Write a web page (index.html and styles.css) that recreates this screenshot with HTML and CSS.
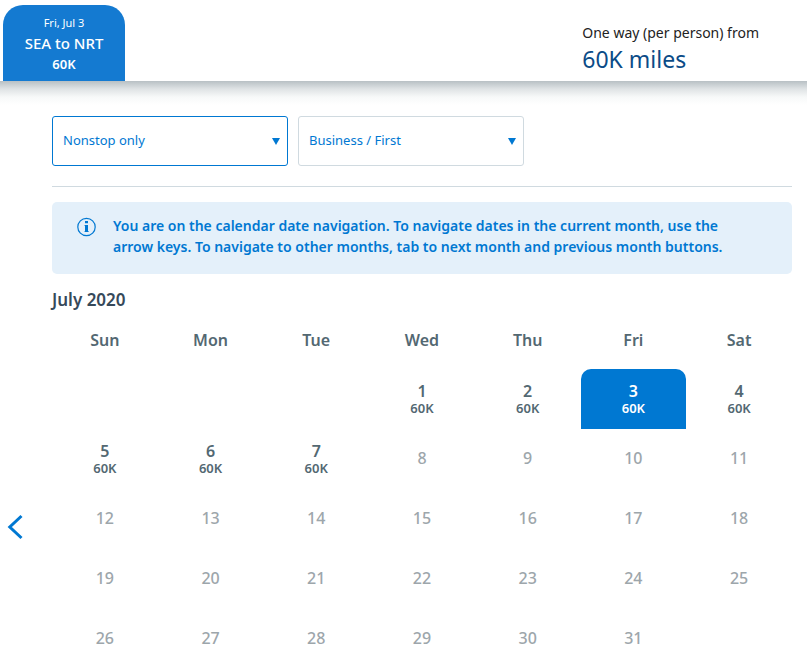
FILE: index.html
```html
<!DOCTYPE html>
<html lang="en">
<head>
<meta charset="utf-8">
<meta name="viewport" content="width=device-width, initial-scale=1">
<title>Award calendar</title>
<link rel="stylesheet" href="styles.css">
</head>
<body>
<header class="summary">
  <a class="slice" href="#calendar">
    <span class="slice-date">Fri, Jul 3</span>
    <span class="slice-route">SEA to NRT</span>
    <span class="slice-price">60K</span>
  </a>
  <div class="fare">
    <span class="fare-label">One way (per person) from</span>
    <span class="fare-price">60K miles</span>
  </div>
</header>
<main class="content">
  <form class="filters">
    <div class="field field-active">
      <select class="select" aria-label="Stops"><option>Nonstop only</option></select>
      <svg class="caret" viewBox="0 0 8 7" aria-hidden="true"><path d="M0 0H8L4 7Z"/></svg>
    </div>
    <div class="field">
      <select class="select" aria-label="Cabin"><option>Business / First</option></select>
      <svg class="caret" viewBox="0 0 8 7" aria-hidden="true"><path d="M0 0H8L4 7Z"/></svg>
    </div>
  </form>
  <div class="notice">
    <svg class="notice-icon" viewBox="0 0 20 20" aria-hidden="true">
      <circle cx="9.5" cy="10" r="8.7" fill="none" stroke="currentColor" stroke-width="1.2"/>
      <path fill="currentColor" d="M8 4H11V6.2H8ZM7.6 8H11V14H11.6V15H7.6V14H8V9H7.6Z"/>
    </svg>
    <p class="notice-text">You are on the calendar date navigation. To navigate dates in the current month, use the arrow keys. To navigate to other months, tab to next month and previous month buttons.</p>
  </div>
  <section class="calendar" id="calendar">
    <button class="previous" type="button" aria-label="Previous month">
      <svg class="chevron" viewBox="0 0 16 26" aria-hidden="true"><path d="M14.5 2L2.8 13L14.5 24"/></svg>
    </button>
    <div class="month">
      <h2 class="month-title">July 2020</h2>
      <table class="days">
        <thead>
          <tr><th>Sun</th><th>Mon</th><th>Tue</th><th>Wed</th><th>Thu</th><th>Fri</th><th>Sat</th></tr>
        </thead>
        <tbody>
          <tr>
            <td></td><td></td><td></td>
            <td><button class="day" type="button">1<span class="miles">60K</span></button></td>
            <td><button class="day" type="button">2<span class="miles">60K</span></button></td>
            <td><button class="day day-selected" type="button" aria-pressed="true">3<span class="miles">60K</span></button></td>
            <td><button class="day" type="button">4<span class="miles">60K</span></button></td>
          </tr>
          <tr>
            <td><button class="day" type="button">5<span class="miles">60K</span></button></td>
            <td><button class="day" type="button">6<span class="miles">60K</span></button></td>
            <td><button class="day" type="button">7<span class="miles">60K</span></button></td>
            <td>8</td><td>9</td><td>10</td><td>11</td>
          </tr>
          <tr><td>12</td><td>13</td><td>14</td><td>15</td><td>16</td><td>17</td><td>18</td></tr>
          <tr><td>19</td><td>20</td><td>21</td><td>22</td><td>23</td><td>24</td><td>25</td></tr>
          <tr><td>26</td><td>27</td><td>28</td><td>29</td><td>30</td><td>31</td><td></td></tr>
        </tbody>
      </table>
    </div>
  </section>
</main>
</body>
</html>
```
FILE: styles.css
```css
* { box-sizing: border-box; }

body {
  margin: 0;
  height: 100vh;
  overflow: hidden;
  background: #fff;
  color: #536872;
  font-family: "Noto Sans", "Open Sans", sans-serif;
  font-size: 16px;
}

button, select { font: inherit; color: inherit; }

.summary {
  display: flex;
  justify-content: space-between;
  padding: 5px 48px 0 3px;
}

.slice {
  display: flex;
  flex-direction: column;
  align-items: center;
  width: 122px;
  height: 76px;
  padding-top: 8px;
  border-radius: 20px 20px 0 0;
  background: #147ad1;
  color: #fff;
  text-decoration: none;
}

.slice-date { font-size: 11px; line-height: 20px; }
.slice-route { font-size: 15px; font-weight: 500; line-height: 20px; }
.slice-price { font-size: 13px; font-weight: 600; line-height: 22px; }

.fare {
  display: flex;
  flex-direction: column;
  padding-top: 16px;
}

.fare-label { color: #222; font-size: 14px; line-height: 24px; }
.fare-price { color: #0b4b87; font-size: 23px; line-height: 28px; }

.content {
  padding: 35px 15px 0 52px;
  background: linear-gradient(#b8c0c4, #dfe3e5 8px, #f7f9f9 16px, #fff 24px) top / 100% 24px no-repeat;
}

.filters {
  display: flex;
  gap: 10px;
  padding-bottom: 20px;
  border-bottom: 1px solid #d0dae0;
}

.field {
  position: relative;
  width: 226px;
  height: 50px;
}

.field-active { width: 236px; }

.select {
  width: 100%;
  height: 100%;
  padding: 0 30px 2px 10px;
  border: 1px solid #d0dae0;
  border-radius: 3px;
  background: #fff;
  color: #0078d2;
  font-size: 13px;
  appearance: none;
}

.field-active .select { border-color: #0078d2; }

.caret {
  position: absolute;
  top: 22px;
  right: 8px;
  width: 8px;
  height: 7px;
  fill: #0078d2;
  pointer-events: none;
}

.notice {
  display: flex;
  gap: 16px;
  margin-top: 15px;
  padding: 13px 60px 17px 25px;
  border-radius: 5px;
  background: #e4f0fa;
  color: #0078d2;
}

.notice-icon { flex: none; width: 20px; height: 20px; margin-top: 2px; }

.notice-text {
  margin: 0;
  font-size: 14px;
  font-weight: 600;
  line-height: 21px;
}

.calendar {
  display: flex;
  margin-left: -52px;
  padding-top: 15px;
}

.previous {
  flex: none;
  width: 52px;
  height: 32px;
  margin-top: 222px;
  padding: 0 0 0 7px;
  border: 0;
  background: none;
  text-align: left;
}

.chevron {
  display: block;
  width: 16px;
  height: 26px;
  fill: none;
  stroke: #0078d2;
  stroke-width: 3;
}

.month { flex: 1; }

.month-title {
  margin: 0;
  color: #36495a;
  font-size: 17px;
  font-weight: 600;
  line-height: 22px;
}

.days {
  width: 100%;
  border-collapse: collapse;
  table-layout: fixed;
  text-align: center;
}

.days th {
  height: 58px;
  padding: 0;
  font-weight: 600;
}

.days td {
  height: 60px;
  padding: 0 0 2px;
  color: #9da6ab;
  font-weight: 500;
}

.days td:has(.day) { padding: 0; }

.day {
  display: block;
  width: 100%;
  height: 60px;
  padding: 0;
  border: 0;
  background: none;
  color: #536872;
  font-weight: 600;
  line-height: 18px;
}

.miles {
  display: block;
  font-size: 13px;
  font-weight: 600;
  line-height: 16px;
}

.day-selected {
  border-radius: 10px 10px 0 0;
  background: #0078d2;
  color: #fff;
}
```
